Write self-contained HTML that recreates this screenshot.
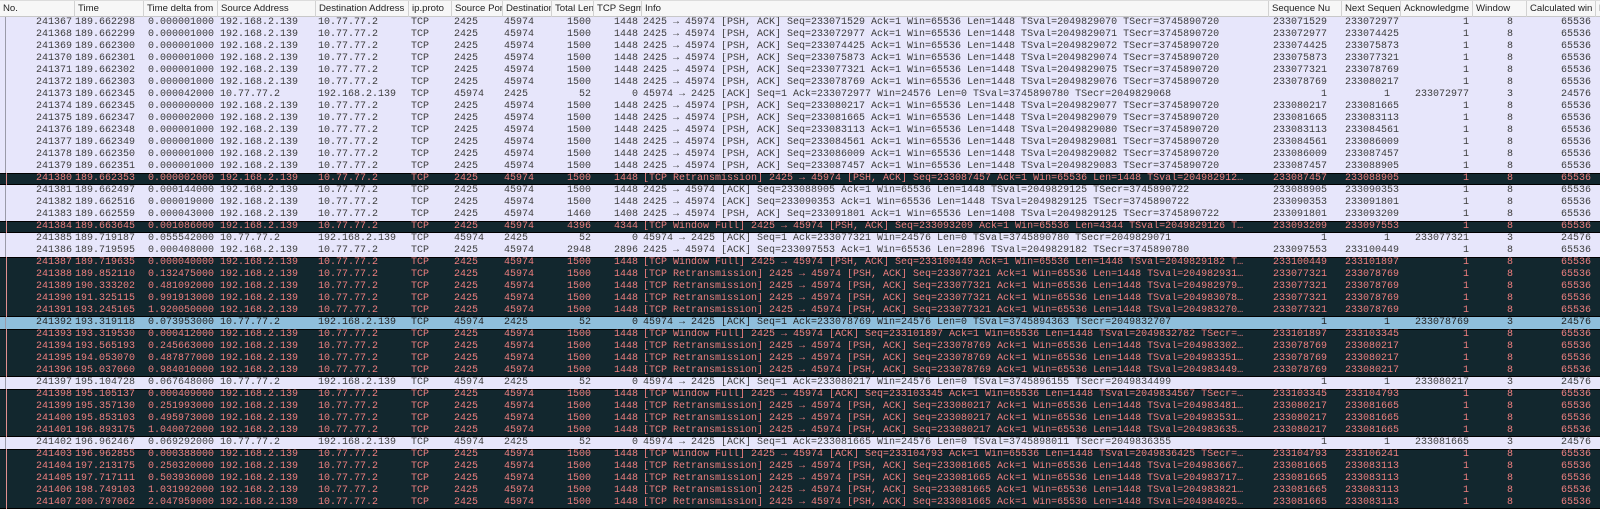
<!DOCTYPE html>
<html><head><meta charset="utf-8">
<style>
*{margin:0;padding:0;box-sizing:border-box}
body{width:1600px;height:509px;background:#fff;overflow:hidden;position:relative}
#h{position:absolute;left:0;top:0;width:1600px;height:17px;background:#f7f7f7;border-bottom:1px solid #c8c8c8;border-top:1px solid #dcdcdc;font:9.6px "Liberation Sans",sans-serif;color:#222}
#h span{position:absolute;top:0;height:16px;line-height:16px;padding-left:3px;border-left:1px solid #d2d2d2;overflow:hidden;white-space:nowrap}
#rows{position:absolute;left:0;top:17px;width:1600px}
.r{position:relative;height:12px;line-height:12px;background:#e7e6fb;color:#3c3c3c;font:10px "Liberation Mono",monospace;white-space:nowrap}
.r:before{content:"";position:absolute;left:5px;top:0;bottom:0;width:1px;background:#9a9aa8}
.d{background:#12272e;color:#ee7f7f}
.d:before{background:#e09090;left:6px}
.d.f{box-shadow:inset 0 1px #000}
.d.l{box-shadow:inset 0 -1px #000}
.d.f.l{box-shadow:inset 0 1px #000,inset 0 -1px #000}
.s{background:#8fbfdc;color:#222}
.r i{font-style:normal;position:absolute;top:0}
.a{right:1528px}.b{left:75px}.c{left:148px}.e{left:220px}.g{left:318px}.p{left:411px}.k{left:454px}.m{left:504px}
.n{right:1009px}.o{right:962px}.q{left:643px;width:625px;overflow:hidden}
.u{right:273px}.v{left:1345px}.w{right:131px}.x{right:87px}.y{right:9px}
</style></head><body>
<div id="h">
<span style="left:0;border-left:none;width:75px">No.</span>
<span style="left:74px;width:69px">Time</span>
<span style="left:143px;width:74px">Time delta from</span>
<span style="left:217px;width:98px">Source Address</span>
<span style="left:315px;width:93px">Destination Address</span>
<span style="left:408px;width:43px">ip.proto</span>
<span style="left:451px;width:51px">Source Port</span>
<span style="left:502px;width:49px">Destination</span>
<span style="left:551px;width:42px">Total Len</span>
<span style="left:593px;width:48px">TCP Segm</span>
<span style="left:641px;width:627px">Info</span>
<span style="left:1268px;width:73px">Sequence Nu</span>
<span style="left:1341px;width:59px">Next Sequence</span>
<span style="left:1400px;width:72px">Acknowledgme</span>
<span style="left:1472px;width:54px">Window</span>
<span style="left:1526px;width:69px">Calculated win</span>
<span style="left:1595px;width:10px">B</span>
</div>
<div id="rows">
<div class="r"><i class="a">241367</i><i class="b">189.662298</i><i class="c">0.000001000</i><i class="e">192.168.2.139</i><i class="g">10.77.77.2</i><i class="p">TCP</i><i class="k">2425</i><i class="m">45974</i><i class="n">1500</i><i class="o">1448</i><i class="q">2425 → 45974 [PSH, ACK] Seq=233071529 Ack=1 Win=65536 Len=1448 TSval=2049829070 TSecr=3745890720</i><i class="u">233071529</i><i class="v">233072977</i><i class="w">1</i><i class="x">8</i><i class="y">65536</i></div>
<div class="r"><i class="a">241368</i><i class="b">189.662299</i><i class="c">0.000001000</i><i class="e">192.168.2.139</i><i class="g">10.77.77.2</i><i class="p">TCP</i><i class="k">2425</i><i class="m">45974</i><i class="n">1500</i><i class="o">1448</i><i class="q">2425 → 45974 [PSH, ACK] Seq=233072977 Ack=1 Win=65536 Len=1448 TSval=2049829071 TSecr=3745890720</i><i class="u">233072977</i><i class="v">233074425</i><i class="w">1</i><i class="x">8</i><i class="y">65536</i></div>
<div class="r"><i class="a">241369</i><i class="b">189.662300</i><i class="c">0.000001000</i><i class="e">192.168.2.139</i><i class="g">10.77.77.2</i><i class="p">TCP</i><i class="k">2425</i><i class="m">45974</i><i class="n">1500</i><i class="o">1448</i><i class="q">2425 → 45974 [PSH, ACK] Seq=233074425 Ack=1 Win=65536 Len=1448 TSval=2049829072 TSecr=3745890720</i><i class="u">233074425</i><i class="v">233075873</i><i class="w">1</i><i class="x">8</i><i class="y">65536</i></div>
<div class="r"><i class="a">241370</i><i class="b">189.662301</i><i class="c">0.000001000</i><i class="e">192.168.2.139</i><i class="g">10.77.77.2</i><i class="p">TCP</i><i class="k">2425</i><i class="m">45974</i><i class="n">1500</i><i class="o">1448</i><i class="q">2425 → 45974 [PSH, ACK] Seq=233075873 Ack=1 Win=65536 Len=1448 TSval=2049829074 TSecr=3745890720</i><i class="u">233075873</i><i class="v">233077321</i><i class="w">1</i><i class="x">8</i><i class="y">65536</i></div>
<div class="r"><i class="a">241371</i><i class="b">189.662302</i><i class="c">0.000001000</i><i class="e">192.168.2.139</i><i class="g">10.77.77.2</i><i class="p">TCP</i><i class="k">2425</i><i class="m">45974</i><i class="n">1500</i><i class="o">1448</i><i class="q">2425 → 45974 [PSH, ACK] Seq=233077321 Ack=1 Win=65536 Len=1448 TSval=2049829075 TSecr=3745890720</i><i class="u">233077321</i><i class="v">233078769</i><i class="w">1</i><i class="x">8</i><i class="y">65536</i></div>
<div class="r"><i class="a">241372</i><i class="b">189.662303</i><i class="c">0.000001000</i><i class="e">192.168.2.139</i><i class="g">10.77.77.2</i><i class="p">TCP</i><i class="k">2425</i><i class="m">45974</i><i class="n">1500</i><i class="o">1448</i><i class="q">2425 → 45974 [PSH, ACK] Seq=233078769 Ack=1 Win=65536 Len=1448 TSval=2049829076 TSecr=3745890720</i><i class="u">233078769</i><i class="v">233080217</i><i class="w">1</i><i class="x">8</i><i class="y">65536</i></div>
<div class="r"><i class="a">241373</i><i class="b">189.662345</i><i class="c">0.000042000</i><i class="e">10.77.77.2</i><i class="g">192.168.2.139</i><i class="p">TCP</i><i class="k">45974</i><i class="m">2425</i><i class="n">52</i><i class="o">0</i><i class="q">45974 → 2425 [ACK] Seq=1 Ack=233072977 Win=24576 Len=0 TSval=3745890780 TSecr=2049829068</i><i class="u">1</i><i class="w" style="right:210px">1</i><i class="w">233072977</i><i class="x">3</i><i class="y">24576</i></div>
<div class="r"><i class="a">241374</i><i class="b">189.662345</i><i class="c">0.000000000</i><i class="e">192.168.2.139</i><i class="g">10.77.77.2</i><i class="p">TCP</i><i class="k">2425</i><i class="m">45974</i><i class="n">1500</i><i class="o">1448</i><i class="q">2425 → 45974 [PSH, ACK] Seq=233080217 Ack=1 Win=65536 Len=1448 TSval=2049829077 TSecr=3745890720</i><i class="u">233080217</i><i class="v">233081665</i><i class="w">1</i><i class="x">8</i><i class="y">65536</i></div>
<div class="r"><i class="a">241375</i><i class="b">189.662347</i><i class="c">0.000002000</i><i class="e">192.168.2.139</i><i class="g">10.77.77.2</i><i class="p">TCP</i><i class="k">2425</i><i class="m">45974</i><i class="n">1500</i><i class="o">1448</i><i class="q">2425 → 45974 [PSH, ACK] Seq=233081665 Ack=1 Win=65536 Len=1448 TSval=2049829079 TSecr=3745890720</i><i class="u">233081665</i><i class="v">233083113</i><i class="w">1</i><i class="x">8</i><i class="y">65536</i></div>
<div class="r"><i class="a">241376</i><i class="b">189.662348</i><i class="c">0.000001000</i><i class="e">192.168.2.139</i><i class="g">10.77.77.2</i><i class="p">TCP</i><i class="k">2425</i><i class="m">45974</i><i class="n">1500</i><i class="o">1448</i><i class="q">2425 → 45974 [PSH, ACK] Seq=233083113 Ack=1 Win=65536 Len=1448 TSval=2049829080 TSecr=3745890720</i><i class="u">233083113</i><i class="v">233084561</i><i class="w">1</i><i class="x">8</i><i class="y">65536</i></div>
<div class="r"><i class="a">241377</i><i class="b">189.662349</i><i class="c">0.000001000</i><i class="e">192.168.2.139</i><i class="g">10.77.77.2</i><i class="p">TCP</i><i class="k">2425</i><i class="m">45974</i><i class="n">1500</i><i class="o">1448</i><i class="q">2425 → 45974 [PSH, ACK] Seq=233084561 Ack=1 Win=65536 Len=1448 TSval=2049829081 TSecr=3745890720</i><i class="u">233084561</i><i class="v">233086009</i><i class="w">1</i><i class="x">8</i><i class="y">65536</i></div>
<div class="r"><i class="a">241378</i><i class="b">189.662350</i><i class="c">0.000001000</i><i class="e">192.168.2.139</i><i class="g">10.77.77.2</i><i class="p">TCP</i><i class="k">2425</i><i class="m">45974</i><i class="n">1500</i><i class="o">1448</i><i class="q">2425 → 45974 [PSH, ACK] Seq=233086009 Ack=1 Win=65536 Len=1448 TSval=2049829082 TSecr=3745890720</i><i class="u">233086009</i><i class="v">233087457</i><i class="w">1</i><i class="x">8</i><i class="y">65536</i></div>
<div class="r"><i class="a">241379</i><i class="b">189.662351</i><i class="c">0.000001000</i><i class="e">192.168.2.139</i><i class="g">10.77.77.2</i><i class="p">TCP</i><i class="k">2425</i><i class="m">45974</i><i class="n">1500</i><i class="o">1448</i><i class="q">2425 → 45974 [PSH, ACK] Seq=233087457 Ack=1 Win=65536 Len=1448 TSval=2049829083 TSecr=3745890720</i><i class="u">233087457</i><i class="v">233088905</i><i class="w">1</i><i class="x">8</i><i class="y">65536</i></div>
<div class="r d f l"><i class="a">241380</i><i class="b">189.662353</i><i class="c">0.000002000</i><i class="e">192.168.2.139</i><i class="g">10.77.77.2</i><i class="p">TCP</i><i class="k">2425</i><i class="m">45974</i><i class="n">1500</i><i class="o">1448</i><i class="q">[TCP Retransmission] 2425 → 45974 [PSH, ACK] Seq=233087457 Ack=1 Win=65536 Len=1448 TSval=204982912…</i><i class="u">233087457</i><i class="v">233088905</i><i class="w">1</i><i class="x">8</i><i class="y">65536</i></div>
<div class="r"><i class="a">241381</i><i class="b">189.662497</i><i class="c">0.000144000</i><i class="e">192.168.2.139</i><i class="g">10.77.77.2</i><i class="p">TCP</i><i class="k">2425</i><i class="m">45974</i><i class="n">1500</i><i class="o">1448</i><i class="q">2425 → 45974 [ACK] Seq=233088905 Ack=1 Win=65536 Len=1448 TSval=2049829125 TSecr=3745890722</i><i class="u">233088905</i><i class="v">233090353</i><i class="w">1</i><i class="x">8</i><i class="y">65536</i></div>
<div class="r"><i class="a">241382</i><i class="b">189.662516</i><i class="c">0.000019000</i><i class="e">192.168.2.139</i><i class="g">10.77.77.2</i><i class="p">TCP</i><i class="k">2425</i><i class="m">45974</i><i class="n">1500</i><i class="o">1448</i><i class="q">2425 → 45974 [ACK] Seq=233090353 Ack=1 Win=65536 Len=1448 TSval=2049829125 TSecr=3745890722</i><i class="u">233090353</i><i class="v">233091801</i><i class="w">1</i><i class="x">8</i><i class="y">65536</i></div>
<div class="r"><i class="a">241383</i><i class="b">189.662559</i><i class="c">0.000043000</i><i class="e">192.168.2.139</i><i class="g">10.77.77.2</i><i class="p">TCP</i><i class="k">2425</i><i class="m">45974</i><i class="n">1460</i><i class="o">1408</i><i class="q">2425 → 45974 [PSH, ACK] Seq=233091801 Ack=1 Win=65536 Len=1408 TSval=2049829125 TSecr=3745890722</i><i class="u">233091801</i><i class="v">233093209</i><i class="w">1</i><i class="x">8</i><i class="y">65536</i></div>
<div class="r d f l"><i class="a">241384</i><i class="b">189.663645</i><i class="c">0.001086000</i><i class="e">192.168.2.139</i><i class="g">10.77.77.2</i><i class="p">TCP</i><i class="k">2425</i><i class="m">45974</i><i class="n">4396</i><i class="o">4344</i><i class="q">[TCP Window Full] 2425 → 45974 [PSH, ACK] Seq=233093209 Ack=1 Win=65536 Len=4344 TSval=2049829126 T…</i><i class="u">233093209</i><i class="v">233097553</i><i class="w">1</i><i class="x">8</i><i class="y">65536</i></div>
<div class="r"><i class="a">241385</i><i class="b">189.719187</i><i class="c">0.055542000</i><i class="e">10.77.77.2</i><i class="g">192.168.2.139</i><i class="p">TCP</i><i class="k">45974</i><i class="m">2425</i><i class="n">52</i><i class="o">0</i><i class="q">45974 → 2425 [ACK] Seq=1 Ack=233077321 Win=24576 Len=0 TSval=3745890780 TSecr=2049829071</i><i class="u">1</i><i class="w" style="right:210px">1</i><i class="w">233077321</i><i class="x">3</i><i class="y">24576</i></div>
<div class="r"><i class="a">241386</i><i class="b">189.719595</i><i class="c">0.000408000</i><i class="e">192.168.2.139</i><i class="g">10.77.77.2</i><i class="p">TCP</i><i class="k">2425</i><i class="m">45974</i><i class="n">2948</i><i class="o">2896</i><i class="q">2425 → 45974 [ACK] Seq=233097553 Ack=1 Win=65536 Len=2896 TSval=2049829182 TSecr=3745890780</i><i class="u">233097553</i><i class="v">233100449</i><i class="w">1</i><i class="x">8</i><i class="y">65536</i></div>
<div class="r d f"><i class="a">241387</i><i class="b">189.719635</i><i class="c">0.000040000</i><i class="e">192.168.2.139</i><i class="g">10.77.77.2</i><i class="p">TCP</i><i class="k">2425</i><i class="m">45974</i><i class="n">1500</i><i class="o">1448</i><i class="q">[TCP Window Full] 2425 → 45974 [PSH, ACK] Seq=233100449 Ack=1 Win=65536 Len=1448 TSval=2049829182 T…</i><i class="u">233100449</i><i class="v">233101897</i><i class="w">1</i><i class="x">8</i><i class="y">65536</i></div>
<div class="r d"><i class="a">241388</i><i class="b">189.852110</i><i class="c">0.132475000</i><i class="e">192.168.2.139</i><i class="g">10.77.77.2</i><i class="p">TCP</i><i class="k">2425</i><i class="m">45974</i><i class="n">1500</i><i class="o">1448</i><i class="q">[TCP Retransmission] 2425 → 45974 [PSH, ACK] Seq=233077321 Ack=1 Win=65536 Len=1448 TSval=204982931…</i><i class="u">233077321</i><i class="v">233078769</i><i class="w">1</i><i class="x">8</i><i class="y">65536</i></div>
<div class="r d"><i class="a">241389</i><i class="b">190.333202</i><i class="c">0.481092000</i><i class="e">192.168.2.139</i><i class="g">10.77.77.2</i><i class="p">TCP</i><i class="k">2425</i><i class="m">45974</i><i class="n">1500</i><i class="o">1448</i><i class="q">[TCP Retransmission] 2425 → 45974 [PSH, ACK] Seq=233077321 Ack=1 Win=65536 Len=1448 TSval=204982979…</i><i class="u">233077321</i><i class="v">233078769</i><i class="w">1</i><i class="x">8</i><i class="y">65536</i></div>
<div class="r d"><i class="a">241390</i><i class="b">191.325115</i><i class="c">0.991913000</i><i class="e">192.168.2.139</i><i class="g">10.77.77.2</i><i class="p">TCP</i><i class="k">2425</i><i class="m">45974</i><i class="n">1500</i><i class="o">1448</i><i class="q">[TCP Retransmission] 2425 → 45974 [PSH, ACK] Seq=233077321 Ack=1 Win=65536 Len=1448 TSval=204983078…</i><i class="u">233077321</i><i class="v">233078769</i><i class="w">1</i><i class="x">8</i><i class="y">65536</i></div>
<div class="r d l"><i class="a">241391</i><i class="b">193.245165</i><i class="c">1.920050000</i><i class="e">192.168.2.139</i><i class="g">10.77.77.2</i><i class="p">TCP</i><i class="k">2425</i><i class="m">45974</i><i class="n">1500</i><i class="o">1448</i><i class="q">[TCP Retransmission] 2425 → 45974 [PSH, ACK] Seq=233077321 Ack=1 Win=65536 Len=1448 TSval=204983270…</i><i class="u">233077321</i><i class="v">233078769</i><i class="w">1</i><i class="x">8</i><i class="y">65536</i></div>
<div class="r s"><i class="a">241392</i><i class="b">193.319118</i><i class="c">0.073953000</i><i class="e">10.77.77.2</i><i class="g">192.168.2.139</i><i class="p">TCP</i><i class="k">45974</i><i class="m">2425</i><i class="n">52</i><i class="o">0</i><i class="q">45974 → 2425 [ACK] Seq=1 Ack=233078769 Win=24576 Len=0 TSval=3745894363 TSecr=2049832707</i><i class="u">1</i><i class="w" style="right:210px">1</i><i class="w">233078769</i><i class="x">3</i><i class="y">24576</i></div>
<div class="r d f"><i class="a">241393</i><i class="b">193.319530</i><i class="c">0.000412000</i><i class="e">192.168.2.139</i><i class="g">10.77.77.2</i><i class="p">TCP</i><i class="k">2425</i><i class="m">45974</i><i class="n">1500</i><i class="o">1448</i><i class="q">[TCP Window Full] 2425 → 45974 [ACK] Seq=233101897 Ack=1 Win=65536 Len=1448 TSval=2049832782 TSecr=…</i><i class="u">233101897</i><i class="v">233103345</i><i class="w">1</i><i class="x">8</i><i class="y">65536</i></div>
<div class="r d"><i class="a">241394</i><i class="b">193.565193</i><i class="c">0.245663000</i><i class="e">192.168.2.139</i><i class="g">10.77.77.2</i><i class="p">TCP</i><i class="k">2425</i><i class="m">45974</i><i class="n">1500</i><i class="o">1448</i><i class="q">[TCP Retransmission] 2425 → 45974 [PSH, ACK] Seq=233078769 Ack=1 Win=65536 Len=1448 TSval=204983302…</i><i class="u">233078769</i><i class="v">233080217</i><i class="w">1</i><i class="x">8</i><i class="y">65536</i></div>
<div class="r d"><i class="a">241395</i><i class="b">194.053070</i><i class="c">0.487877000</i><i class="e">192.168.2.139</i><i class="g">10.77.77.2</i><i class="p">TCP</i><i class="k">2425</i><i class="m">45974</i><i class="n">1500</i><i class="o">1448</i><i class="q">[TCP Retransmission] 2425 → 45974 [PSH, ACK] Seq=233078769 Ack=1 Win=65536 Len=1448 TSval=204983351…</i><i class="u">233078769</i><i class="v">233080217</i><i class="w">1</i><i class="x">8</i><i class="y">65536</i></div>
<div class="r d l"><i class="a">241396</i><i class="b">195.037060</i><i class="c">0.984010000</i><i class="e">192.168.2.139</i><i class="g">10.77.77.2</i><i class="p">TCP</i><i class="k">2425</i><i class="m">45974</i><i class="n">1500</i><i class="o">1448</i><i class="q">[TCP Retransmission] 2425 → 45974 [PSH, ACK] Seq=233078769 Ack=1 Win=65536 Len=1448 TSval=204983449…</i><i class="u">233078769</i><i class="v">233080217</i><i class="w">1</i><i class="x">8</i><i class="y">65536</i></div>
<div class="r"><i class="a">241397</i><i class="b">195.104728</i><i class="c">0.067648000</i><i class="e">10.77.77.2</i><i class="g">192.168.2.139</i><i class="p">TCP</i><i class="k">45974</i><i class="m">2425</i><i class="n">52</i><i class="o">0</i><i class="q">45974 → 2425 [ACK] Seq=1 Ack=233080217 Win=24576 Len=0 TSval=3745896155 TSecr=2049834499</i><i class="u">1</i><i class="w" style="right:210px">1</i><i class="w">233080217</i><i class="x">3</i><i class="y">24576</i></div>
<div class="r d f"><i class="a">241398</i><i class="b">195.105137</i><i class="c">0.000409000</i><i class="e">192.168.2.139</i><i class="g">10.77.77.2</i><i class="p">TCP</i><i class="k">2425</i><i class="m">45974</i><i class="n">1500</i><i class="o">1448</i><i class="q">[TCP Window Full] 2425 → 45974 [ACK] Seq=233103345 Ack=1 Win=65536 Len=1448 TSval=2049834567 TSecr=…</i><i class="u">233103345</i><i class="v">233104793</i><i class="w">1</i><i class="x">8</i><i class="y">65536</i></div>
<div class="r d"><i class="a">241399</i><i class="b">195.357130</i><i class="c">0.251993000</i><i class="e">192.168.2.139</i><i class="g">10.77.77.2</i><i class="p">TCP</i><i class="k">2425</i><i class="m">45974</i><i class="n">1500</i><i class="o">1448</i><i class="q">[TCP Retransmission] 2425 → 45974 [PSH, ACK] Seq=233080217 Ack=1 Win=65536 Len=1448 TSval=204983481…</i><i class="u">233080217</i><i class="v">233081665</i><i class="w">1</i><i class="x">8</i><i class="y">65536</i></div>
<div class="r d"><i class="a">241400</i><i class="b">195.853103</i><i class="c">0.495973000</i><i class="e">192.168.2.139</i><i class="g">10.77.77.2</i><i class="p">TCP</i><i class="k">2425</i><i class="m">45974</i><i class="n">1500</i><i class="o">1448</i><i class="q">[TCP Retransmission] 2425 → 45974 [PSH, ACK] Seq=233080217 Ack=1 Win=65536 Len=1448 TSval=204983531…</i><i class="u">233080217</i><i class="v">233081665</i><i class="w">1</i><i class="x">8</i><i class="y">65536</i></div>
<div class="r d l"><i class="a">241401</i><i class="b">196.893175</i><i class="c">1.040072000</i><i class="e">192.168.2.139</i><i class="g">10.77.77.2</i><i class="p">TCP</i><i class="k">2425</i><i class="m">45974</i><i class="n">1500</i><i class="o">1448</i><i class="q">[TCP Retransmission] 2425 → 45974 [PSH, ACK] Seq=233080217 Ack=1 Win=65536 Len=1448 TSval=204983635…</i><i class="u">233080217</i><i class="v">233081665</i><i class="w">1</i><i class="x">8</i><i class="y">65536</i></div>
<div class="r"><i class="a">241402</i><i class="b">196.962467</i><i class="c">0.069292000</i><i class="e">10.77.77.2</i><i class="g">192.168.2.139</i><i class="p">TCP</i><i class="k">45974</i><i class="m">2425</i><i class="n">52</i><i class="o">0</i><i class="q">45974 → 2425 [ACK] Seq=1 Ack=233081665 Win=24576 Len=0 TSval=3745898011 TSecr=2049836355</i><i class="u">1</i><i class="w" style="right:210px">1</i><i class="w">233081665</i><i class="x">3</i><i class="y">24576</i></div>
<div class="r d f"><i class="a">241403</i><i class="b">196.962855</i><i class="c">0.000388000</i><i class="e">192.168.2.139</i><i class="g">10.77.77.2</i><i class="p">TCP</i><i class="k">2425</i><i class="m">45974</i><i class="n">1500</i><i class="o">1448</i><i class="q">[TCP Window Full] 2425 → 45974 [ACK] Seq=233104793 Ack=1 Win=65536 Len=1448 TSval=2049836425 TSecr=…</i><i class="u">233104793</i><i class="v">233106241</i><i class="w">1</i><i class="x">8</i><i class="y">65536</i></div>
<div class="r d"><i class="a">241404</i><i class="b">197.213175</i><i class="c">0.250320000</i><i class="e">192.168.2.139</i><i class="g">10.77.77.2</i><i class="p">TCP</i><i class="k">2425</i><i class="m">45974</i><i class="n">1500</i><i class="o">1448</i><i class="q">[TCP Retransmission] 2425 → 45974 [PSH, ACK] Seq=233081665 Ack=1 Win=65536 Len=1448 TSval=204983667…</i><i class="u">233081665</i><i class="v">233083113</i><i class="w">1</i><i class="x">8</i><i class="y">65536</i></div>
<div class="r d"><i class="a">241405</i><i class="b">197.717111</i><i class="c">0.503936000</i><i class="e">192.168.2.139</i><i class="g">10.77.77.2</i><i class="p">TCP</i><i class="k">2425</i><i class="m">45974</i><i class="n">1500</i><i class="o">1448</i><i class="q">[TCP Retransmission] 2425 → 45974 [PSH, ACK] Seq=233081665 Ack=1 Win=65536 Len=1448 TSval=204983717…</i><i class="u">233081665</i><i class="v">233083113</i><i class="w">1</i><i class="x">8</i><i class="y">65536</i></div>
<div class="r d"><i class="a">241406</i><i class="b">198.749103</i><i class="c">1.031992000</i><i class="e">192.168.2.139</i><i class="g">10.77.77.2</i><i class="p">TCP</i><i class="k">2425</i><i class="m">45974</i><i class="n">1500</i><i class="o">1448</i><i class="q">[TCP Retransmission] 2425 → 45974 [PSH, ACK] Seq=233081665 Ack=1 Win=65536 Len=1448 TSval=204983821…</i><i class="u">233081665</i><i class="v">233083113</i><i class="w">1</i><i class="x">8</i><i class="y">65536</i></div>
<div class="r d l"><i class="a">241407</i><i class="b">200.797062</i><i class="c">2.047959000</i><i class="e">192.168.2.139</i><i class="g">10.77.77.2</i><i class="p">TCP</i><i class="k">2425</i><i class="m">45974</i><i class="n">1500</i><i class="o">1448</i><i class="q">[TCP Retransmission] 2425 → 45974 [PSH, ACK] Seq=233081665 Ack=1 Win=65536 Len=1448 TSval=204984025…</i><i class="u">233081665</i><i class="v">233083113</i><i class="w">1</i><i class="x">8</i><i class="y">65536</i></div>
</div>
</body></html>
